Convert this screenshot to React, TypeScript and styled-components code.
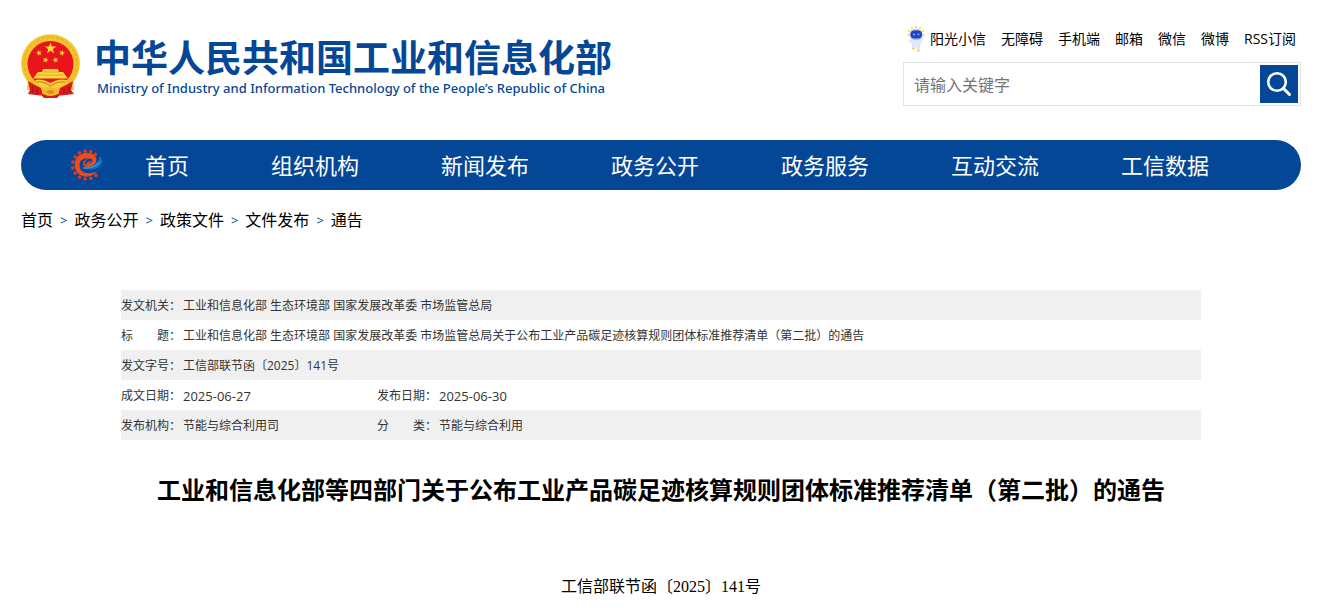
import React from "react";
import styled, { createGlobalStyle } from "styled-components";

const BLUE = "#054797";

const GlobalStyle = createGlobalStyle`
  * { box-sizing: border-box; }
  body {
    margin: 0;
    padding-right: 3px;
    background: #fff;
    color: #000;
    font-family: "Open Sans", "Noto Sans CJK SC", sans-serif;
  }
  a { color: inherit; text-decoration: none; }
`;

const Page = styled.div`
  max-width: 1280px;
  margin: 0 auto;
  padding-bottom: 16px;
`;

const Header = styled.header`
  display: flex;
  justify-content: space-between;
  align-items: flex-start;
  padding: 26px 0 34px;
`;

const Brand = styled.a`
  display: flex;
  align-items: flex-start;
  gap: 13px;
  padding-top: 8px;
  color: ${BLUE};
`;

const BrandText = styled.div`
  display: flex;
  flex-direction: column;
  padding-top: 2px;
`;

const BrandName = styled.span`
  font-size: 37px;
  line-height: 44px;
  font-weight: 700;
  white-space: nowrap;
`;

const BrandSub = styled.span`
  padding-left: 3px;
  font-size: 13px;
  line-height: 16px;
  font-weight: 500;
  font-family: "Noto Sans", sans-serif;
  white-space: nowrap;
`;

const Tools = styled.div`
  width: 398px;
`;

const QuickLinks = styled.nav`
  display: flex;
  align-items: center;
  justify-content: flex-end;
  gap: 15px;
  height: 26px;
  padding-right: 5px;
  font-size: 14px;
  line-height: 20px;
  white-space: nowrap;
`;

const QuickLink = styled.a`
  display: flex;
  align-items: center;
  gap: 5px;
`;

const Search = styled.form`
  display: flex;
  margin-top: 10px;
  padding: 2px;
  border: 1px solid #e4e4e4;
`;

const SearchInput = styled.input`
  flex: 1;
  min-width: 0;
  height: 38px;
  padding: 2px 8px 0;
  border: 0;
  outline: 0;
  font: inherit;
  font-size: 16px;
  &::placeholder { color: #757575; opacity: 1; }
`;

const SearchButton = styled.button`
  display: flex;
  align-items: center;
  justify-content: center;
  width: 38px;
  height: 38px;
  padding: 0;
  border: 0;
  background: ${BLUE};
  cursor: pointer;
`;

const MainNav = styled.nav`
  display: flex;
  height: 50px;
  padding: 0 51px 0 50px;
  border-radius: 25px;
  background: ${BLUE};
  color: #fff;
  font-size: 22px;
  line-height: 50px;
`;

const HomeLink = styled.a`
  display: flex;
  align-items: center;
  gap: 41px;
  flex: 159 1 0;
  white-space: nowrap;
`;

const NavLink = styled.a`
  flex: 170 1 0;
  text-align: center;
  white-space: nowrap;
`;

const Crumbs = styled.nav`
  display: flex;
  gap: 7px;
  padding-top: 18px;
  font-size: 16px;
  line-height: 24px;
`;

const Separator = styled.span`
  color: ${BLUE};
  font-size: 13px;
`;

const Article = styled.main`
  max-width: 1080px;
  margin: 58px auto 0;
`;

const InfoTable = styled.table`
  width: 100%;
  border-collapse: collapse;
  table-layout: fixed;
  color: #333;
  font-size: 12px;
  line-height: 28px;
  th, td {
    height: 30px;
    padding: 2px 0 0;
    font-weight: 400;
    text-align: left;
    white-space: nowrap;
  }
  tr:nth-child(odd) { background: #f0f0f0; }
`;

const Col = styled.col<{ $w?: number }>`
  width: ${(p) => (p.$w ? `${p.$w}px` : "auto")};
`;

const DateText = styled.time`
  display: block;
  font-size: 13px;
`;

const Title = styled.h1`
  margin: 32px 0 0;
  font-size: 24px;
  line-height: 36px;
  font-weight: 700;
  text-align: center;
`;

const DocNumber = styled.p`
  margin: 67px 0 0;
  font-family: "Liberation Serif", "Noto Sans CJK SC", serif;
  font-size: 16px;
  line-height: 24px;
  text-align: center;
`;

const STAR = "M0-1 .23-.31 .95-.31 .37 .12 .59 .81 0 .38-.59 .81-.37 .12-.95-.31-.23-.31Z";

function Emblem() {
  return (
    <svg width="60" height="65" viewBox="0 0 60 65" aria-hidden="true">
      <circle cx="29.500" cy="29.500" r="29.300" fill="#f5c42c" />
      <circle cx="29.500" cy="29.500" r="26.500" fill="none" stroke="#e2a51e" strokeWidth="1" strokeDasharray="3 2" />
      <circle cx="29.500" cy="30" r="23" fill="#ea141c" />
      <g fill="#fbd93a">
        <path d={STAR} transform="translate(29.500 14.500) scale(6.200)" />
        <path d={STAR} transform="translate(18 19) rotate(-15) scale(3.200)" />
        <path d={STAR} transform="translate(41 19) rotate(15) scale(3.200)" />
        <path d={STAR} transform="translate(24.500 26) rotate(15) scale(3.200)" />
        <path d={STAR} transform="translate(34.500 26) rotate(-15) scale(3.200)" />
        <path d="M22 35H37L38 38H42L47 44.500H12L17 38H21Z" />
      </g>
      <path d="M22 38H38M17 41H42" stroke="#e2a51e" />
      <path d="M7 46 12 49H47L52 46 53 56H6Z" fill="#f5c42c" />
      <path d="M14 46Q22 44 29.500 49 37 44 46 46L41 52 29.500 55 18 52Z" fill="#f8cf3f" />
      <path d="M16 48Q23 47 29.500 52 37 47 44 48" fill="none" stroke="#de8b1c" strokeWidth="1.300" />
      <path d="M7 47 14 51 20 54 22 61 19 61.500 7 60 9 56Z" fill="#d9191c" />
      <path d="M52 47 45 51 39 54 37 61 40 61.500 53 60 50 56Z" fill="#d9191c" />
      <path d="M11 52 12 60M16 54 16 60M48 52 47 60M43 54 43 60" stroke="#a8141b" strokeWidth="1" />
      <path d="M21 56Q29 50 38 56L37 62Q29 66 22 62Z" fill="#f2bb2a" />
      <path d="M25 58Q29 54 34 58 29 62 25 58Z" fill="#e08a1d" />
      <path d="M19 60 23 64H36L40 60 37 60Q29.500 64 22 60Z" fill="#d9191c" />
    </svg>
  );
}

function GearLogo() {
  const teeth = [48, 72, 96, 120, 144, 168, 192, 216, 240, 264, 288, 310];
  return (
    <svg width="33" height="32" viewBox="0 0 33 32" aria-hidden="true">
      <g fill="#e8391c">
        {teeth.map((a) => (
          <circle key={a} cx="14" cy="0" r="1.700" transform={`translate(15.500 16) rotate(${a})`} />
        ))}
      </g>
      <path
        d="M26 22.500Q21 28.500 13.500 27.500 4 25.500 3.500 16 4 5.500 14.500 3.800 24 3.500 25.500 10 25.500 16.500 18 18 12.500 18.500 12 15 12.500 10.500 17 9.500 13 8.500 9.500 12 7.500 16 9.500 20.500 15 27 26 22.500Z"
        fill="#f04a18"
      />
      <path d="M13.500 15.500Q20 15.500 21.500 11.500 20.500 8.500 16.500 10 13.500 12 13.500 15.500Z" fill={BLUE} />
      <path d="M15.500 14.500Q18.500 14.500 19 12.200" fill="none" stroke="#f04a18" strokeWidth="1.400" />
      <path d="M10.500 18Q20 20 26 13.500 29 10.500 28.500 7 34 11.500 29 17 21 23.500 10.500 18Z" fill="#1272bd" />
      <path d="M12 18.800Q22 20 28 13.500" fill="none" stroke="#2f9bd8" strokeWidth="1.300" />
    </svg>
  );
}

function Robot() {
  return (
    <svg width="18" height="26" viewBox="0 0 18 26" aria-hidden="true">
      <g fill="#ffd21f">
        <circle cx="9" cy="1.200" r="1" />
        <circle cx="5" cy="2" r="1" />
        <circle cx="13" cy="2" r="1" />
        <circle cx="2" cy="5" r="1" />
        <circle cx="16" cy="5" r="1" />
        <circle cx="1.500" cy="9" r="1" />
        <circle cx="16.500" cy="9" r="1" />
      </g>
      <path d="M4 13 1 14 2.500 17 5 16.500 5 22.500 8 23 9 20 10 25 12.500 25 13.500 18 16 13 15 10 13 12Z" fill="#dfe8f6" />
      <rect x="2.500" y="3" width="13" height="11" rx="5.500" fill="#a9bff0" />
      <rect x="3.500" y="4.500" width="11.500" height="8" rx="4" fill="#1f45c4" />
      <path d="M6 8.500H8M10.500 8.500H12.500" stroke="#6fb0ff" strokeWidth="1.400" />
      <path d="M5 22.500 8 23M10 25 12.500 25" stroke="#f3cf55" strokeWidth="1.500" />
    </svg>
  );
}

function SearchIcon() {
  return (
    <svg width="26" height="26" viewBox="0 0 26 26" fill="none" stroke="#fff" aria-hidden="true">
      <circle cx="11" cy="11" r="8.800" strokeWidth="2.600" />
      <path d="M17.500 17.500 23.500 23.500" strokeWidth="3" strokeLinecap="round" />
    </svg>
  );
}

const quickLinks = ["无障碍", "手机端", "邮箱", "微信", "微博", "RSS订阅"];
const navLinks = ["组织机构", "新闻发布", "政务公开", "政务服务", "互动交流", "工信数据"];
const crumbs = ["首页", "政务公开", "政策文件", "文件发布", "通告"];

export default function App() {
  return (
    <>
      <GlobalStyle />
      <Page>
        <Header>
          <Brand href="#">
            <Emblem />
            <BrandText>
              <BrandName>中华人民共和国工业和信息化部</BrandName>
              <BrandSub>Ministry of Industry and Information Technology of the People’s Republic of China</BrandSub>
            </BrandText>
          </Brand>
          <Tools>
            <QuickLinks>
              <QuickLink href="#">
                <Robot />
                阳光小信
              </QuickLink>
              {quickLinks.map((t) => (
                <QuickLink href="#" key={t}>{t}</QuickLink>
              ))}
            </QuickLinks>
            <Search>
              <SearchInput type="text" placeholder="请输入关键字" aria-label="请输入关键字" />
              <SearchButton type="button" aria-label="搜索">
                <SearchIcon />
              </SearchButton>
            </Search>
          </Tools>
        </Header>

        <MainNav>
          <HomeLink href="#">
            <GearLogo />
            首页
          </HomeLink>
          {navLinks.map((t) => (
            <NavLink href="#" key={t}>{t}</NavLink>
          ))}
        </MainNav>

        <Crumbs>
          {crumbs.map((t, i) => (
            <React.Fragment key={t}>
              {i > 0 && <Separator>&gt;</Separator>}
              <a href="#">{t}</a>
            </React.Fragment>
          ))}
        </Crumbs>

        <Article>
          <InfoTable>
            <colgroup>
              <Col $w={62} />
              <Col $w={194} />
              <Col $w={62} />
              <Col />
            </colgroup>
            <tbody>
              <tr>
                <th scope="row">发文机关：</th>
                <td colSpan={3}>工业和信息化部 生态环境部 国家发展改革委 市场监管总局</td>
              </tr>
              <tr>
                <th scope="row">标　　题：</th>
                <td colSpan={3}>
                  工业和信息化部 生态环境部 国家发展改革委 市场监管总局关于公布工业产品碳足迹核算规则团体标准推荐清单（第二批）的通告
                </td>
              </tr>
              <tr>
                <th scope="row">发文字号：</th>
                <td colSpan={3}>工信部联节函〔2025〕141号</td>
              </tr>
              <tr>
                <th scope="row">成文日期：</th>
                <td><DateText>2025-06-27</DateText></td>
                <th scope="row">发布日期：</th>
                <td><DateText>2025-06-30</DateText></td>
              </tr>
              <tr>
                <th scope="row">发布机构：</th>
                <td>节能与综合利用司</td>
                <th scope="row">分　　类：</th>
                <td>节能与综合利用</td>
              </tr>
            </tbody>
          </InfoTable>
          <Title>工业和信息化部等四部门关于公布工业产品碳足迹核算规则团体标准推荐清单（第二批）的通告</Title>
          <DocNumber>工信部联节函〔2025〕141号</DocNumber>
        </Article>
      </Page>
    </>
  );
}
